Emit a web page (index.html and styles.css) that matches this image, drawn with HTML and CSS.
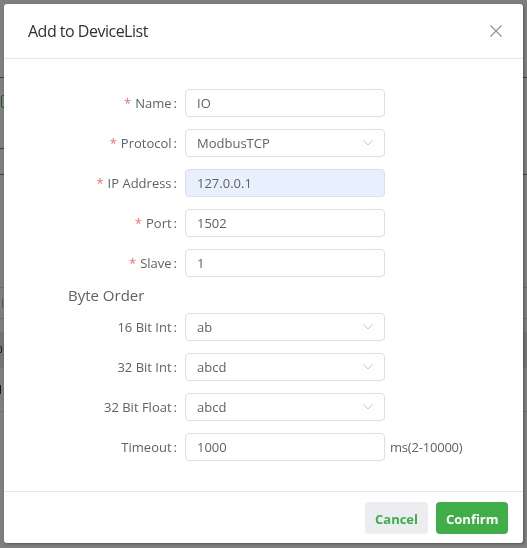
FILE: index.html
```html
<!DOCTYPE html>
<html lang="en">
<head>
<meta charset="utf-8">
<title>Add to DeviceList</title>
<link rel="stylesheet" href="styles.css">
</head>
<body>
<div class="app">
  <div class="app-bar"></div>
  <div class="app-icon"></div>
  <div class="app-link"></div>
  <div class="app-sep"></div>
  <div class="app-thead"><span class="glyph glyph-n"></span></div>
  <div class="app-row app-row-hover"><span class="glyph glyph-c"></span></div>
  <div class="app-row"><span class="glyph glyph-f"></span></div>
</div>

<div class="mask">
  <div class="dialog">
    <header class="dlg-header">
      <span class="dlg-title">Add to DeviceList</span>
      <span class="dlg-close">
        <svg width="12" height="12" viewBox="0 0 12 12"><path d="M0.5 0.5 L11.5 11.5 M11.5 0.5 L0.5 11.5" stroke="#909399" stroke-width="1.2" fill="none"/></svg>
      </span>
    </header>
    <div class="dlg-body">
      <div class="form-group">
        <div class="form-item">
          <div class="form-label"><span class="req">*</span>Name<span class="colon">:</span></div>
          <div class="field"><span class="field-text">IO</span></div>
        </div>
        <div class="form-item">
          <div class="form-label"><span class="req">*</span>Protocol<span class="colon">:</span></div>
          <div class="field"><span class="field-text">ModbusTCP</span><svg class="arrow" width="10" height="6" viewBox="0 0 10 6"><path d="M0.5 0.5 L5 5 L9.5 0.5" stroke="#c0c4cc" stroke-width="1" fill="none"/></svg></div>
        </div>
        <div class="form-item">
          <div class="form-label"><span class="req">*</span>IP Address<span class="colon">:</span></div>
          <div class="field field-autofill"><span class="field-text">127.0.0.1</span></div>
        </div>
        <div class="form-item">
          <div class="form-label"><span class="req">*</span>Port<span class="colon">:</span></div>
          <div class="field"><span class="field-text">1502</span></div>
        </div>
        <div class="form-item">
          <div class="form-label"><span class="req">*</span>Slave<span class="colon">:</span></div>
          <div class="field"><span class="field-text">1</span></div>
        </div>
      </div>
      <div class="section-title">Byte Order</div>
      <div class="form-group">
        <div class="form-item">
          <div class="form-label">16 Bit Int<span class="colon">:</span></div>
          <div class="field"><span class="field-text">ab</span><svg class="arrow" width="10" height="6" viewBox="0 0 10 6"><path d="M0.5 0.5 L5 5 L9.5 0.5" stroke="#c0c4cc" stroke-width="1" fill="none"/></svg></div>
        </div>
        <div class="form-item">
          <div class="form-label">32 Bit Int<span class="colon">:</span></div>
          <div class="field"><span class="field-text">abcd</span><svg class="arrow" width="10" height="6" viewBox="0 0 10 6"><path d="M0.5 0.5 L5 5 L9.5 0.5" stroke="#c0c4cc" stroke-width="1" fill="none"/></svg></div>
        </div>
        <div class="form-item">
          <div class="form-label">32 Bit Float<span class="colon">:</span></div>
          <div class="field"><span class="field-text">abcd</span><svg class="arrow" width="10" height="6" viewBox="0 0 10 6"><path d="M0.5 0.5 L5 5 L9.5 0.5" stroke="#c0c4cc" stroke-width="1" fill="none"/></svg></div>
        </div>
        <div class="form-item">
          <div class="form-label">Timeout<span class="colon">:</span></div>
          <div class="field"><span class="field-text">1000</span></div>
          <span class="suffix">ms(2-10000)</span>
        </div>
      </div>
    </div>
    <footer class="dlg-footer">
      <button class="btn btn-cancel">Cancel</button>
      <button class="btn btn-confirm">Confirm</button>
    </footer>
  </div>
</div>
</body>
</html>
```

FILE: styles.css
```css
* { box-sizing: border-box; margin: 0; padding: 0; }
html, body { width: 527px; height: 548px; overflow: hidden; }
body {
  font-family: "Open Sans", "Noto Sans", sans-serif;
  font-size: 13px;
  color: #606266;
  background: #ffffff;
}

/* underlying page (mostly hidden by the dialog) */
.app { display: flex; flex-direction: column; height: 548px; }
.app-bar { height: 78px; border-bottom: 1px solid #4aa84f; }
.app-icon { width: 12px; height: 13px; margin: 17px 0 0 1px; border: 1.5px solid #4aa84f; border-radius: 2px; }
.app-link { height: 12px; margin-top: 29px; width: 20px; border-bottom: 1px solid #4aa84f; }
.app-sep { height: 1px; margin-top: 25px; background: #4aa84f; }
.app-thead { height: 32px; margin-top: 112px; border-top: 1px solid #d8d8d8; border-bottom: 1px solid #d8d8d8; display: flex; align-items: center; }
.app-row { height: 44px; border-bottom: 1px solid #e2e2e2; display: flex; align-items: center; }
.app-row-hover { margin-top: 13px; height: 36px; background: #e8e8e8; }
.glyph { display: block; width: 3px; height: 9px; }
.glyph-n { border-right: 1px solid #b0b0b0; }
.glyph-c { border: 1px solid #333; border-left: none; width: 2px; height: 7px; border-radius: 0 3px 3px 0; }
.glyph-f { border-left: 1px solid #333; }

/* overlay */
.mask {
  position: fixed;
  inset: 0;
  background: rgba(0, 0, 0, 0.5);
  padding: 4px 0 0 4px;
}
.dialog {
  width: 519px;
  background: #ffffff;
  border-radius: 3px;
  box-shadow: 1px 1px 3px rgba(0, 0, 0, 0.35);
}

.dlg-header {
  height: 55px;
  padding: 0 21px 0 24px;
  border-bottom: 1px solid #e4e7ed;
  display: flex;
  align-items: center;
  justify-content: space-between;
}
.dlg-title { font-size: 16px; color: #303133; letter-spacing: -0.5px; }
.dlg-close { display: flex; width: 12px; height: 12px; }

.dlg-body { padding: 30px 20px; }
.form-group { display: flex; flex-direction: column; gap: 12px; }
.form-item { display: flex; align-items: center; height: 28px; }
.form-label {
  width: 161px;
  padding-right: 8px;
  text-align: right;
  color: #606266;
  white-space: nowrap;
}
.req { color: #f56c6c; margin-right: 4px; }
.colon { margin-left: 2px; }

.field {
  width: 200px;
  height: 28px;
  border: 1px solid #dcdfe6;
  border-radius: 4px;
  background: #ffffff;
  padding: 0 11px;
  display: flex;
  align-items: center;
  justify-content: space-between;
  color: #606266;
}
.field-autofill { background: #e8f0fe; }
.arrow { flex: none; }
.suffix { margin-left: 5px; color: #606266; letter-spacing: -0.2px; }

.section-title {
  margin: 7px 0 7px 44px;
  height: 22px;
  line-height: 22px;
  font-size: 15px;
  color: #606266;
}

.dlg-footer {
  border-top: 1px solid #e4e7ed;
  padding: 10px 15px 9px;
  display: flex;
  justify-content: flex-end;
  gap: 8px;
}
.btn {
  height: 32px;
  border: none;
  border-radius: 4px;
  font-family: "Open Sans", "Noto Sans", sans-serif;
  font-size: 13px;
  font-weight: 700;
  padding: 0 10px;
  padding-top: 1px;
}
.btn-cancel { background: #ebedf0; color: #3fae49; width: 63px; }
.btn-confirm { background: #3fae49; color: #ffffff; width: 72px; }
```
